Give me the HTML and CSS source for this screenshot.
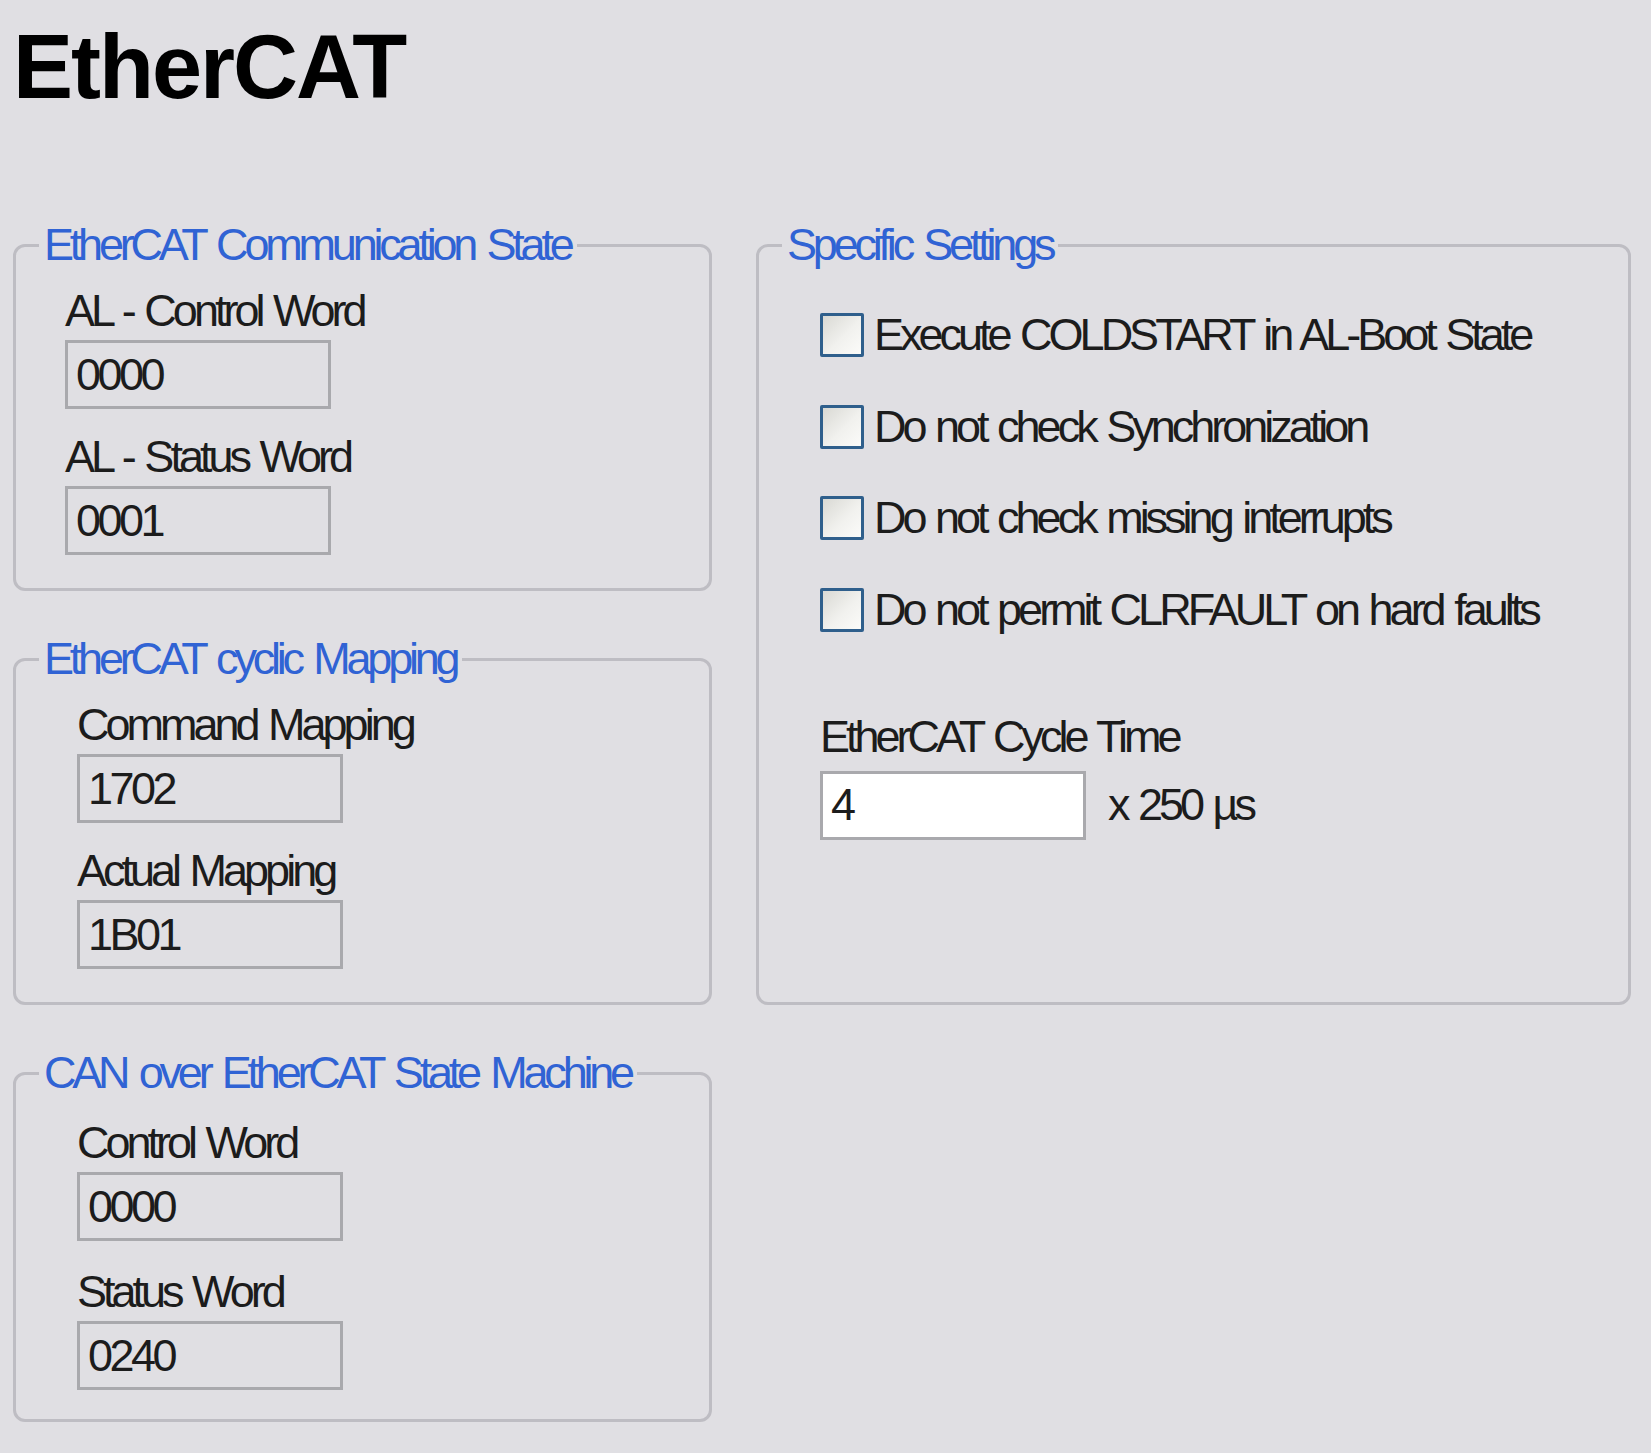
FILE: index.html
```html
<!DOCTYPE html>
<html lang="en">
<head>
<meta charset="utf-8">
<title>EtherCAT</title>
<link rel="stylesheet" href="styles.css">
</head>
<body>
<main class="page">
  <h1 class="title">EtherCAT</h1>
  <div class="layout">
    <fieldset class="group group-comm">
      <legend class="group-title">EtherCAT Communication State</legend>
      <div class="group-body">
        <div class="field">
          <label class="field-label">AL - Control Word</label>
          <input class="field-input" type="text" readonly value="0000">
        </div>
        <div class="field">
          <label class="field-label">AL - Status Word</label>
          <input class="field-input" type="text" readonly value="0001">
        </div>
      </div>
    </fieldset>

    <fieldset class="group group-settings">
      <legend class="group-title">Specific Settings</legend>
      <div class="group-body settings-body">
        <label class="check-row"><input class="check" type="checkbox"><span>Execute COLDSTART in AL-Boot State</span></label>
        <label class="check-row"><input class="check" type="checkbox"><span>Do not check Synchronization</span></label>
        <label class="check-row"><input class="check" type="checkbox"><span>Do not check missing interrupts</span></label>
        <label class="check-row"><input class="check" type="checkbox"><span>Do not permit CLRFAULT on hard faults</span></label>
        <div class="cycle">
          <label class="field-label cycle-label">EtherCAT Cycle Time</label>
          <div class="cycle-row">
            <input class="field-input field-input-edit" type="text" value="4">
            <span class="unit">x 250 µs</span>
          </div>
        </div>
      </div>
    </fieldset>

    <fieldset class="group group-mapping">
      <legend class="group-title">EtherCAT cyclic Mapping</legend>
      <div class="group-body group-body-wide">
        <div class="field">
          <label class="field-label">Command Mapping</label>
          <input class="field-input" type="text" readonly value="1702">
        </div>
        <div class="field">
          <label class="field-label">Actual Mapping</label>
          <input class="field-input" type="text" readonly value="1B01">
        </div>
      </div>
    </fieldset>

    <fieldset class="group group-coe">
      <legend class="group-title">CAN over EtherCAT State Machine</legend>
      <div class="group-body group-body-wide group-body-coe">
        <div class="field">
          <label class="field-label">Control Word</label>
          <input class="field-input" type="text" readonly value="0000">
        </div>
        <div class="field">
          <label class="field-label">Status Word</label>
          <input class="field-input" type="text" readonly value="0240">
        </div>
      </div>
    </fieldset>
  </div>
</main>
</body>
</html>
```

FILE: styles.css
```css
* { box-sizing: border-box; }

html, body {
  margin: 0;
  padding: 0;
}

body {
  background: #e0dfe3;
  font-family: "Liberation Sans", Arial, sans-serif;
  color: #1c1c1c;
}

.page {
  width: 1651px;
  height: 1453px;
  padding: 22px 0 0 13px;
}

.title {
  margin: 0;
  font-family: "Liberation Sans", Arial, sans-serif;
  font-weight: 700;
  font-size: 90px;
  line-height: 90px;
  letter-spacing: -2px;
  color: #000;
}

.layout {
  margin-top: 113px;
  display: grid;
  grid-template-columns: 699px 875px;
  grid-template-rows: auto auto auto;
  column-gap: 44px;
  row-gap: 48px;
}

.group {
  margin: 0;
  padding: 0;
  min-width: 0;
  border: 3px solid #bebdc3;
  border-radius: 12px;
}

.group-comm { grid-column: 1; grid-row: 1; }
.group-settings { grid-column: 2; grid-row: 1 / 3; }
.group-mapping { grid-column: 1; grid-row: 2; }
.group-coe { grid-column: 1; grid-row: 3; }

.group-title {
  margin-left: 23px;
  padding: 0 6px 0 5px;
  font-size: 45px;
  line-height: 40px;
  letter-spacing: -4.2px;
  word-spacing: 4px;
  white-space: nowrap;
  color: #3063d4;
}

.group-body {
  padding: 26px 0 33px 49px;
}

.group-body-wide {
  padding-left: 61px;
}

.group-body-coe {
  padding-top: 30px;
  padding-bottom: 29px;
}

.field + .field {
  margin-top: 28px;
}

.group-body-coe .field + .field {
  margin-top: 31px;
}

.field-label {
  display: block;
  font-size: 45px;
  line-height: 40px;
  letter-spacing: -4px;
  word-spacing: 3px;
  white-space: nowrap;
  margin-bottom: 9px;
}

.field-input {
  display: block;
  width: 266px;
  height: 69px;
  margin: 0;
  padding: 0 0 0 8px;
  border: 3px solid #a9a9ad;
  border-radius: 0;
  background: #e0dfe3;
  font-family: inherit;
  font-size: 45px;
  letter-spacing: -3.5px;
  color: #1c1c1c;
  outline: none;
}

.field-input-edit {
  background: #ffffff;
}

.settings-body {
  padding-top: 48px;
  padding-left: 61px;
}

.check-row {
  display: flex;
  align-items: center;
  gap: 10px;
  height: 44px;
  font-size: 45px;
  line-height: 44px;
  letter-spacing: -4px;
  word-spacing: 3px;
  white-space: nowrap;
}

.check-row + .check-row {
  margin-top: 47.5px;
}

.check {
  appearance: none;
  -webkit-appearance: none;
  flex: none;
  width: 44px;
  height: 44px;
  margin: 0;
  border: 3px solid #2f5f8c;
  border-radius: 2px;
  background: linear-gradient(135deg, #d9d9d4 0%, #f1f1ee 55%, #fbfbf9 100%);
}

.cycle {
  margin-top: 85px;
}

.cycle-label {
  margin-bottom: 14px;
}

.cycle-row {
  display: flex;
  align-items: center;
  gap: 22px;
}

.unit {
  font-size: 45px;
  line-height: 40px;
  letter-spacing: -4px;
  word-spacing: 3px;
  white-space: nowrap;
}
```
